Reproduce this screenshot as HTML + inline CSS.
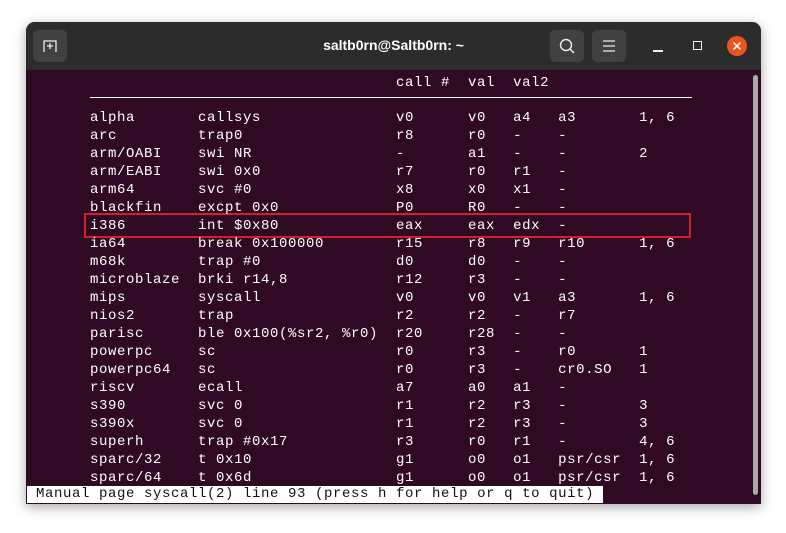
<!DOCTYPE html>
<html><head><style>
body{margin:0;width:786px;height:533px;background:#fff;position:relative;overflow:hidden;font-family:"Liberation Sans",sans-serif}
#win{position:absolute;left:26px;top:22px;width:735px;height:482px;border-radius:9px 9px 0 0;overflow:hidden;box-shadow:0 3px 12px rgba(0,0,0,.35);background:#300a24}
#tb{position:absolute;left:0;top:0;width:100%;height:48px;background:#2c2c2c}
.btn{position:absolute;top:8px;width:34px;height:32px;background:#414141;border-radius:5px}
#title{position:absolute;left:0;width:100%;top:15px;text-align:center;color:#fff;font-weight:bold;font-size:14px}
pre{margin:0;position:absolute;font-family:"Liberation Mono",monospace;font-size:14px;letter-spacing:0.6px;line-height:18px;color:#fff}
</style></head><body>
<div id="win">
<div id="tb">
<div class="btn" style="left:7px"><svg width="34" height="32"><path d="M11 22V11h12v11M17 13v6M14 16h6" stroke="#eee" stroke-width="1.3" fill="none"/></svg></div>
<div id="title">saltb0rn@Saltb0rn: ~</div>
<div class="btn" style="left:524px"><svg width="34" height="32"><circle cx="16" cy="15" r="5.5" stroke="#eee" stroke-width="1.4" fill="none"/><path d="M20 19l4 4" stroke="#eee" stroke-width="1.5"/></svg></div>
<div class="btn" style="left:566px"><svg width="34" height="32"><path d="M11 11h12M11 16h12M11 21h12" stroke="#eee" stroke-width="1.3"/></svg></div>
<div style="position:absolute;left:627px;top:28px;width:10px;height:1.5px;background:#eee"></div>
<div style="position:absolute;left:667px;top:19px;width:7px;height:7px;border:1.3px solid #eee"></div>
<div style="position:absolute;left:701px;top:14px;width:20px;height:20px;border-radius:50%;background:#e95420"><svg width="20" height="20"><path d="M6.5 6.5l7 7M13.5 6.5l-7 7" stroke="#fff" stroke-width="1.5"/></svg></div>
</div>
<div style="position:absolute;left:727px;top:53px;width:5px;height:420px;background:#aaa;border-radius:3px"></div>
<pre style="left:64px;top:52px">                                  call #  val  val2</pre>
<div style="position:absolute;left:64px;top:75px;width:602px;height:1px;background:#fff"></div>
<div style="position:absolute;left:58px;top:191px;width:603px;height:21px;border:2px solid #d0202c"></div>
<pre style="left:64px;top:87px">alpha       callsys               v0      v0   a4   a3       1, 6
arc         trap0                 r8      r0   -    -
arm/OABI    swi NR                -       a1   -    -        2
arm/EABI    swi 0x0               r7      r0   r1   -
arm64       svc #0                x8      x0   x1   -
blackfin    excpt 0x0             P0      R0   -    -
i386        int $0x80             eax     eax  edx  -
ia64        break 0x100000        r15     r8   r9   r10      1, 6
m68k        trap #0               d0      d0   -    -
microblaze  brki r14,8            r12     r3   -    -
mips        syscall               v0      v0   v1   a3       1, 6
nios2       trap                  r2      r2   -    r7
parisc      ble 0x100(%sr2, %r0)  r20     r28  -    -
powerpc     sc                    r0      r3   -    r0       1
powerpc64   sc                    r0      r3   -    cr0.SO   1
riscv       ecall                 a7      a0   a1   -
s390        svc 0                 r1      r2   r3   -        3
s390x       svc 0                 r1      r2   r3   -        3
superh      trap #0x17            r3      r0   r1   -        4, 6
sparc/32    t 0x10                g1      o0   o1   psr/csr  1, 6
sparc/64    t 0x6d                g1      o0   o1   psr/csr  1, 6</pre>
<pre style="left:1px;top:464px;background:#fff;color:#111;height:17px;line-height:17px;width:576px"> Manual page syscall(2) line 93 (press h for help or q to quit)</pre>
</div>
</body></html>
